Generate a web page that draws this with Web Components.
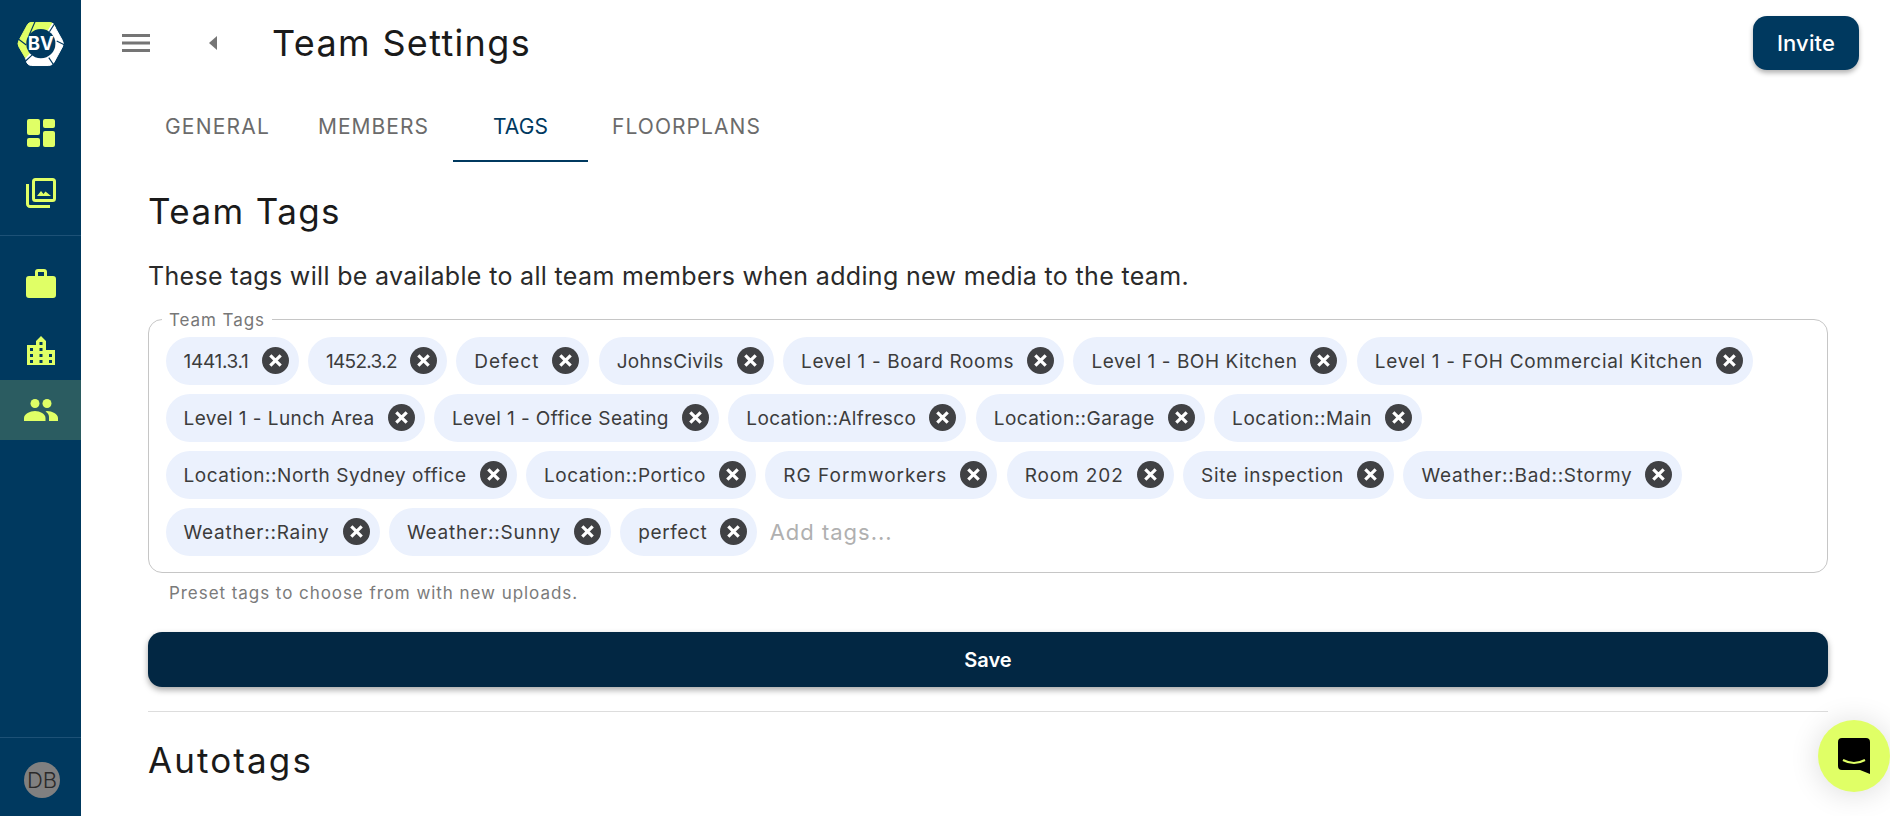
<!DOCTYPE html>
<html><head><meta charset="utf-8"><style>
html,body{margin:0;height:100%;overflow:hidden;background:#fff}
body{font-family:Inter,"Liberation Sans",sans-serif;display:flex;height:816px;color:#1a1a1a}
</style></head><body>
<template id="t-side"><style>
:host{display:flex;flex-direction:column;width:81px;height:816px;background:#00395f;flex:none}
.logo{height:87px;display:flex;align-items:center;justify-content:center}
.i{height:60px;width:100%;display:flex;align-items:center;justify-content:center}
.a{background:#2b5c61}
.top{padding-top:16px;height:149px;box-sizing:border-box;border-bottom:1px solid #1d5176}
.b{padding-top:17px;display:flex;flex-direction:column}
.m{margin-top:7px}
.sp{flex:1}
.foot{border-top:1px solid #1d5176;height:79px;display:flex;align-items:center;justify-content:center;padding:6px 0 0 3px;box-sizing:border-box}
.av{width:36px;height:36px;border-radius:50%;background:#808080;color:#2a2a2a;font-size:22px;font-weight:300;display:flex;align-items:center;justify-content:center;white-space:nowrap}
svg{display:block}
</style>
<div class="logo"><svg width="48" height="46" viewBox="52 60 145 138">
<path d="M94 64H152Q160 64 164 72L168 80L122 128ZM94 64Q88 64 84 70L58 118Q52 128 58 138L78 172L122 128Z" fill="#e0ff66" stroke="#e0ff66" stroke-width="3" stroke-linejoin="round"/>
<path d="M160 66L189 118Q195 128 189 138L164 184Q158 194 148 194H96Q86 194 82 186L78 172L122 128Z" fill="#fff" stroke="#fff" stroke-width="3" stroke-linejoin="round"/>
<circle cx="124" cy="128" r="44" fill="#00395f"/>
<path d="M108 58L88 104M172 58L150 92M200 134L172 120M168 200L148 170M74 184L98 162M48 108L80 132" stroke="#00395f" stroke-width="3.500"/>
<text x="124" y="148" font-family="Inter,sans-serif" font-weight="700" font-size="56" fill="#fff" text-anchor="middle">BV</text></svg></div>
<div class="top">
<div class="i"><svg width="28" height="28" viewBox="0 0 28 28" fill="#e0ff66"><rect width="13" height="16" rx="2"/><rect x="16" width="12" height="9" rx="2"/><rect x="16" y="12" width="12" height="16" rx="2"/><rect y="19" width="13" height="9" rx="2"/></svg></div>
<div class="i"><svg width="30" height="30" viewBox="0 0 30 30" fill="none"><rect x="7.500" y="1.500" width="21" height="21" rx="2" stroke="#e0ff66" stroke-width="3"/><path d="M1.500 6v20a2.500 2.500 0 0 0 2.500 2.500h20" stroke="#e0ff66" stroke-width="3"/><path d="M11 18l4-5 2.500 3 2-2.500L25 18z" fill="#e0ff66"/></svg></div>
</div>
<div class="b">
<div class="i"><svg width="30" height="29" viewBox="0 0 30 29" fill="#e0ff66"><path d="M9 7V3a3 3 0 0 1 3-3h6a3 3 0 0 1 3 3v4h6a3 3 0 0 1 3 3v16a3 3 0 0 1-3 3H3a3 3 0 0 1-3-3V10a3 3 0 0 1 3-3zM12 3v4h6V3z" fill-rule="evenodd"/></svg></div>
<div class="i m"><svg width="28" height="29" viewBox="0 0 28 29"><path d="M0 9h9V5l5-5 5 5v9h9v15H0z" fill="#e0ff66"/><g fill="#00395f"><rect x="3" y="12" width="3" height="3"/><rect x="3" y="18" width="3" height="3"/><rect x="3" y="24" width="3" height="3"/><rect x="12.500" y="6" width="3" height="3"/><rect x="12.500" y="12" width="3" height="3"/><rect x="12.500" y="18" width="3" height="3"/><rect x="12.500" y="24" width="3" height="3"/><rect x="22" y="18" width="3" height="3"/><rect x="22" y="24" width="3" height="3"/></g></svg></div>
<div class="i a"><svg width="34" height="22" viewBox="0 0 34 22" fill="#e0ff66"><circle cx="11" cy="4.500" r="4.500"/><circle cx="23" cy="4.500" r="4.500"/><path d="M0 22v-3c0-4 6-7 11-7s10.500 3 10.500 7v3z"/><path d="M23 12c5 0 11 3 11 7v3h-9v-4c0-2-1-4-3.500-5.500z"/></svg></div>
</div>
<div class="sp"></div>
<div class="foot"><div class="av">DB</div></div>
</template>

<template id="t-header"><style>
:host{display:flex;align-items:center;height:86px;padding-left:41px;padding-right:31px}
.back{margin-left:59px}
h1{margin:0 0 0 55px;font-size:36px;font-weight:400;flex:1;color:#1a1a1a;white-space:nowrap}
button{width:106px;height:54px;border:0;border-radius:14px;background:#00395f;color:#fff;font:500 22px Inter,sans-serif;box-shadow:0 3px 5px rgba(0,0,0,.3);padding:0}
svg{display:block;flex:none}
</style>
<svg width="28" height="18" viewBox="0 0 28 18" fill="#757575"><rect y="0" width="28" height="3"/><rect y="7.500" width="28" height="3"/><rect y="15" width="28" height="3"/></svg>
<svg class="back" width="8" height="14" viewBox="0 0 8 14" fill="#757575"><path d="M8 0v14L0 7z"/></svg>
<h1><span data-w="259"><slot></slot></span></h1>
<button><span data-w="58">Invite</span></button>
</template>

<template id="t-tabs"><style>
:host{display:flex;height:76px;padding-left:60px;color:#6b6b6b;font-size:21px}
a{display:flex;align-items:center;padding:5px 24px 0;box-sizing:border-box;white-space:nowrap}
a.on{color:#00395f;border-bottom:2px solid #00395f;justify-content:center;width:135px;padding:6px 0 0}
</style>
<a><span data-w="105">GENERAL</span></a><a><span data-w="111">MEMBERS</span></a><a class="on"><span data-w="55">TAGS</span></a><a><span data-w="149">FLOORPLANS</span></a>
</template>

<template id="t-chip"><style>
:host{display:inline-flex;flex:none;align-items:center;height:48px;border-radius:24px;background:#ebf1fd;color:#3c3c3c;font-size:19px;padding:0 10px 0 18px;gap:13px;white-space:nowrap}
svg{display:block;flex:none}
.t{position:relative;top:.5px}
</style><span class="t"><slot></slot></span><svg width="27" height="27" viewBox="0 0 27 27"><circle cx="13.500" cy="13.500" r="13.500" fill="#404144"/><path d="M8.300 8.300l10.400 10.400M18.700 8.300L8.300 18.700" stroke="#fff" stroke-width="3.200"/></svg>
</template>

<template id="t-row"><style>
:host{display:flex;gap:9.400px}
</style><slot></slot></template>

<template id="t-add"><style>
:host{display:flex;align-items:center;height:48px;margin-left:3px;font-size:22px;color:#b0b0b0;white-space:nowrap}
</style><span data-w="123">Add tags...</span></template>

<template id="t-field"><style>
:host{display:block;position:relative}
.box{border:1.500px solid #c6c6c6;border-radius:14px;padding:16.500px 13px 16px 16.500px;display:flex;flex-direction:column;gap:9px;height:254px;box-sizing:border-box;position:relative}
.lg{position:absolute;left:13px;top:-10px;background:#fff;padding:0 7px;font-size:17px;color:#777;line-height:20px;white-space:nowrap}
.help{font-size:17px;color:#7b7b7b;padding:10px 0 0 21px;line-height:20px;white-space:nowrap;height:20px}
</style><div class="box"><span class="lg"><span data-w="96">Team Tags</span></span><slot></slot></div><div class="help"><span data-w="409">Preset tags to choose from with new uploads.</span></div>
</template>

<template id="t-page"><style>
:host{display:block;flex:1;min-width:0;height:816px;overflow:hidden;position:relative}
.c{padding:0 62px 0 67px}
h2{font-size:35px;font-weight:400;margin:0;line-height:44px;color:#1a1a1a;white-space:nowrap}
p{font-size:25px;font-weight:400;margin:27px 0;line-height:32px;color:#2a2a2a;white-space:nowrap}
.save{display:block;width:100%;height:55px;margin-top:29px;background:#022743;color:#fff;border:0;border-radius:14px;font:600 20px Inter,sans-serif;box-shadow:0 3px 6px rgba(0,0,0,.35)}
hr{border:0;border-top:1px solid #ddd;margin:24px 0 0}
.auto{margin-top:26px}
</style><slot name="head"></slot><slot name="tabs"></slot><div class="c">
<h2 style="margin-top:27px"><span data-w="193">Team Tags</span></h2><p><span data-w="1041">These tags will be available to all team members when adding new media to the team.</span></p>
<slot></slot><button class="save">Save</button><hr><h2 class="auto"><span data-w="165">Autotags</span></h2></div>
</template>

<template id="t-chat"><style>
:host{position:fixed;left:1818px;top:720px;width:72px;height:72px;border-radius:50%;background:#e0ff66;box-shadow:0 2px 30px rgba(0,0,0,.14);display:flex;align-items:center;justify-content:center}
</style><svg width="32" height="36" viewBox="0 0 32 36"><path d="M4 0h24a4 4 0 0 1 4 4v32l-10-4H4a4 4 0 0 1-4-4V4a4 4 0 0 1 4-4z"/><path d="M5 22q11 6 22 0" stroke="#e0ff66" stroke-width="2" fill="none"/></svg>
</template>

<x-side></x-side>
<x-page>
<x-header slot="head">Team Settings</x-header>
<x-tabs slot="tabs"></x-tabs>
<x-field>
<x-row><x-chip w="133">1441.3.1</x-chip><x-chip w="139">1452.3.2</x-chip><x-chip w="133">Defect</x-chip><x-chip w="175">JohnsCivils</x-chip><x-chip w="281">Level 1 - Board Rooms</x-chip><x-chip w="274">Level 1 - BOH Kitchen</x-chip><x-chip w="396">Level 1 - FOH Commercial Kitchen</x-chip></x-row>
<x-row><x-chip w="259">Level 1 - Lunch Area</x-chip><x-chip w="285">Level 1 - Office Seating</x-chip><x-chip w="238">Location::Alfresco</x-chip><x-chip w="229">Location::Garage</x-chip><x-chip w="208">Location::Main</x-chip></x-row>
<x-row><x-chip w="351">Location::North Sydney office</x-chip><x-chip w="230">Location::Portico</x-chip><x-chip w="232">RG Formworkers</x-chip><x-chip w="167">Room 202</x-chip><x-chip w="211">Site inspection</x-chip><x-chip w="279">Weather::Bad::Stormy</x-chip></x-row>
<x-row><x-chip w="214">Weather::Rainy</x-chip><x-chip w="222">Weather::Sunny</x-chip><x-chip w="137">perfect</x-chip><x-add></x-add></x-row>
</x-field>
</x-page>
<x-chat></x-chat>
<script>
function textOf(el){const s=el.querySelector('slot');return (s?s.assignedNodes().map(n=>n.textContent).join(''):el.textContent).trim();}
function fit(el,w){const n=textOf(el).length;if(!n)return;el.style.letterSpacing='0';const nat=el.getBoundingClientRect().width;el.style.letterSpacing=((w-nat)/n)+'px';}
for(const [n,id] of [['x-side','t-side'],['x-header','t-header'],['x-tabs','t-tabs'],['x-chip','t-chip'],['x-row','t-row'],['x-add','t-add'],['x-field','t-field'],['x-page','t-page'],['x-chat','t-chat']]){
customElements.define(n,class extends HTMLElement{
constructor(){super();this.attachShadow({mode:'open'}).appendChild(document.getElementById(id).content.cloneNode(true));}
connectedCallback(){
this.shadowRoot.querySelectorAll('[data-w]').forEach(e=>fit(e,+e.dataset.w));
const t=this.shadowRoot.querySelector('.t');if(t)fit(t,+this.getAttribute('w')-68);
}});
}
</script>
</body></html>
